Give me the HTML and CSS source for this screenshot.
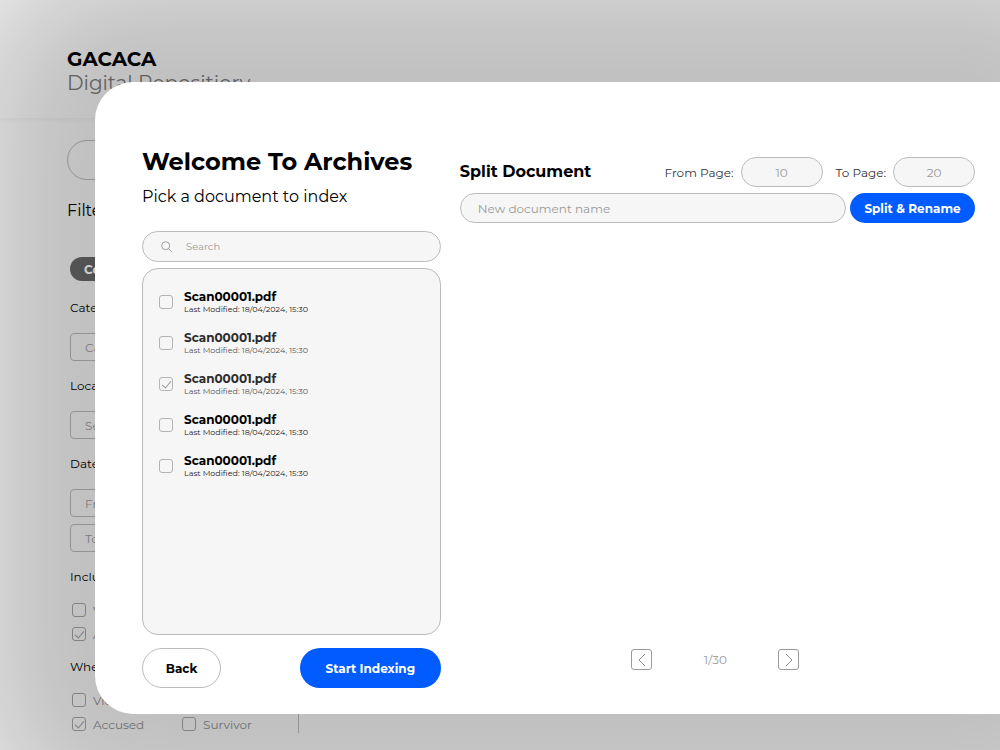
FILE: index.html
```html
<!DOCTYPE html>
<html lang="en">
    <head>
        <meta charset="utf-8">
        <title>GACACA Digital Repositiory</title>
        <link rel="stylesheet" href="styles.css">
    </head>
    <body>
        <div class="page">
            <div class="header">
                <h1>GACACA</h1>
                <p>Digital Repositiory</p>
            </div>

            <div class="filters">
                <input type="text" class="page-search" aria-label="Search the repository">
                <h2>Filters</h2>
                <div class="filter-list">
                    <button type="button" class="tag">Collections</button>

                    <label class="name" for="category">Category</label>
                    <input type="text" class="field" id="category" placeholder="Category">

                    <label class="name" for="location">Location</label>
                    <input type="text" class="field" id="location" placeholder="Select">

                    <label class="name" for="from">Date</label>
                    <input type="text" class="field" id="from" placeholder="From">
                    <input type="text" class="field" placeholder="To" aria-label="To">

                    <p class="name">Include</p>
                    <div class="options single">
                        <label><input type="checkbox">Victim</label>
                        <label><input type="checkbox" checked>Accused</label>
                    </div>

                    <p class="name">Where</p>
                    <div class="options">
                        <label><input type="checkbox">Victim</label>
                        <label><input type="checkbox">Witness</label>
                        <label><input type="checkbox" checked>Accused</label>
                        <label><input type="checkbox">Survivor</label>
                    </div>
                </div>
            </div>
        </div>

        <div class="modal">
            <div class="archive">
                <h2>Welcome To Archives</h2>
                <p class="sub">Pick a document to index</p>
                <div class="search">
                    <svg width="12" height="12" viewBox="0 0 12 12" fill="none" stroke="#8c8c8c" stroke-width="0.8">
                        <circle cx="4.7" cy="4.7" r="4"/>
                        <path d="M7.7 7.7L11.3 11.3"/>
                    </svg>
                    <input type="text" placeholder="Search" aria-label="Search">
                </div>
                <div class="documents">
                    <label class="document">
                        <input type="checkbox">
                        <span><b>Scan00001.pdf</b><small>Last Modified: 18/04/2024, 15:30</small></span>
                    </label>
                    <label class="document soft">
                        <input type="checkbox">
                        <span><b>Scan00001.pdf</b><small>Last Modified: 18/04/2024, 15:30</small></span>
                    </label>
                    <label class="document soft">
                        <input type="checkbox" checked>
                        <span><b>Scan00001.pdf</b><small>Last Modified: 18/04/2024, 15:30</small></span>
                    </label>
                    <label class="document">
                        <input type="checkbox">
                        <span><b>Scan00001.pdf</b><small>Last Modified: 18/04/2024, 15:30</small></span>
                    </label>
                    <label class="document">
                        <input type="checkbox">
                        <span><b>Scan00001.pdf</b><small>Last Modified: 18/04/2024, 15:30</small></span>
                    </label>
                </div>
                <div class="actions">
                    <button type="button" class="back">Back</button>
                    <button type="button" class="start">Start Indexing</button>
                </div>
            </div>

            <div class="split">
                <div class="split-row">
                    <h3>Split Document</h3>
                    <label for="frompage">From Page:</label>
                    <input type="text" class="number" id="frompage" placeholder="10">
                    <label for="topage" class="to">To Page:</label>
                    <input type="text" class="number" id="topage" placeholder="20">
                </div>
                <div class="rename-row">
                    <input type="text" placeholder="New document name" aria-label="New document name">
                    <button type="button">Split &amp; Rename</button>
                </div>
                <div class="pager">
                    <button type="button" aria-label="Previous page">
                        <svg width="10" height="14" viewBox="0 0 10 14" fill="none" stroke="#8c8c8c"><path d="M8 1L2 7L8 13"/></svg>
                    </button>
                    <span>1/30</span>
                    <button type="button" aria-label="Next page">
                        <svg width="10" height="14" viewBox="0 0 10 14" fill="none" stroke="#8c8c8c"><path d="M2 1L8 7L2 13"/></svg>
                    </button>
                </div>
            </div>
        </div>
    </body>
</html>
```
FILE: styles.css
```css
* {
    box-sizing: border-box;
}
body {
    margin: 0;
    height: 100vh;
    overflow: hidden;
    background: #eeeeee;
    color: #000000;
    font-family: Montserrat, Inter, sans-serif;
    font-size: 12px;
}
h1, h2, h3, p {
    margin: 0;
}
input, button {
    font-family: inherit;
    font-size: 12px;
    margin: 0;
}
button {
    cursor: pointer;
}
input::placeholder {
    color: #999999;
    opacity: 1;
}
input[type="checkbox"] {
    appearance: none;
    flex: none;
    display: flex;
    justify-content: center;
    width: 14px;
    height: 14px;
    border: 1px solid #b4b4b4;
    border-radius: 3px;
}
input[type="checkbox"]:checked::after {
    content: "";
    width: 4px;
    height: 8px;
    margin-top: 1px;
    border: solid #999999;
    border-width: 0 1px 1px 0;
    transform: rotate(40deg);
}

/* page behind the modal */
.header {
    height: 118px;
    padding: 47px 67px 0;
    box-shadow: 0 1px 6px rgba(0, 0, 0, 0.05);
}
.header h1 {
    font-size: 20px;
    line-height: 24px;
}
.header p {
    color: #777777;
    font-size: 20px;
    line-height: 24px;
}
.filters {
    width: 299px;
    padding: 22px 0 0 67px;
}
.page-search {
    display: block;
    width: 100%;
    height: 40px;
    background: transparent;
    border: 1px solid #b4b4b4;
    border-radius: 20px;
}
.filters h2 {
    margin-top: 21px;
    font-size: 16px;
    font-weight: 400;
    line-height: 20px;
}
.filter-list {
    margin-left: 3px;
    padding-top: 36px;
    border-right: 1px solid #b4b4b4;
}
.tag {
    display: block;
    height: 24px;
    margin-bottom: 2px;
    padding: 0 14px;
    background: #666666;
    color: #ffffff;
    border: 0;
    border-radius: 12px;
    font-weight: 700;
}
.name {
    display: block;
    padding: 16px 0 17px;
    line-height: 17px;
}
.field {
    display: block;
    width: 200px;
    height: 28px;
    margin-bottom: 7px;
    padding: 0 14px;
    background: transparent;
    border: 1px solid #b4b4b4;
    border-radius: 4px;
}
.field + .name {
    margin-top: -7px;
}
.options {
    display: grid;
    grid-template-columns: 110px 110px;
    row-gap: 6px;
    margin: -1px 0;
    padding-left: 2px;
    color: #8a8a8a;
}
.options.single {
    grid-template-columns: 110px;
}
.options label {
    display: flex;
    align-items: center;
    gap: 7px;
    height: 18px;
}
.options input[type="checkbox"] {
    border-color: #a0a0a0;
}

/* modal */
.modal {
    position: absolute;
    top: 82px;
    right: 0;
    bottom: 36px;
    left: 95px;
    display: flex;
    gap: 19px;
    padding: 64px 25px 26px 47px;
    background: #ffffff;
    border-radius: 38px 0 0 38px;
    box-shadow: 0 0 130px 110px rgba(0, 0, 0, 0.2);
}
.archive {
    flex: 58 1 0;
    display: flex;
    flex-direction: column;
}
.archive h2 {
    font-size: 24px;
    line-height: 32px;
    white-space: nowrap;
}
.sub {
    margin: 7px 0 22px;
    font-size: 16px;
    line-height: 24px;
}
.search {
    display: flex;
    align-items: center;
    gap: 13px;
    height: 31px;
    margin-bottom: 6px;
    padding: 0 18px;
    background: #f6f6f6;
    border: 1px solid #bbbbbb;
    border-radius: 16px;
}
.search svg {
    flex: none;
}
.search input {
    flex: 1;
    min-width: 0;
    padding: 0;
    background: transparent;
    border: 0;
    font-size: 10px;
}
.documents {
    flex: 1;
    padding: 19px 16px;
    background: #f6f6f6;
    border: 1px solid #bbbbbb;
    border-radius: 16px;
}
.document {
    display: flex;
    align-items: center;
    gap: 11px;
    height: 27px;
    margin-bottom: 14px;
}
.document b, .document small {
    display: block;
}
.document b {
    font-size: 12px;
    line-height: 15px;
}
.document small {
    color: #222222;
    font-size: 8px;
    line-height: 10px;
}
.soft b {
    color: #2c2c2c;
}
.soft small {
    color: #555555;
}
.actions {
    display: flex;
    justify-content: space-between;
    margin-top: 13px;
}
.actions button {
    height: 40px;
    border: 1px solid #bbbbbb;
    border-radius: 20px;
    background: #ffffff;
    color: #000000;
    font-weight: 700;
}
.back {
    width: 79px;
}
.actions .start {
    width: 141px;
    background: #005cff;
    border: 0;
    color: #ffffff;
}
.split {
    flex: 100 1 0;
    display: flex;
    flex-direction: column;
    padding: 11px 0 18px;
}
.split-row {
    display: flex;
    align-items: center;
    gap: 7px;
    margin-bottom: 6px;
}
.split-row h3 {
    margin-right: auto;
    font-size: 16px;
    line-height: 20px;
}
.split-row label {
    color: #333333;
}
.split-row .to {
    margin-left: 6px;
}
.split-row input, .rename-row input {
    height: 30px;
    background: #f6f6f6;
    border: 1px solid #bbbbbb;
    border-radius: 15px;
}
.split-row .number {
    width: 82px;
    text-align: center;
}
.rename-row {
    display: flex;
    gap: 4px;
}
.rename-row input {
    flex: 1;
    min-width: 0;
    padding: 0 17px;
}
.rename-row button {
    width: 125px;
    height: 30px;
    padding: 0;
    background: #005cff;
    border: 0;
    border-radius: 15px;
    color: #ffffff;
    font-weight: 700;
}
.pager {
    display: flex;
    justify-content: space-between;
    align-items: center;
    width: 172px;
    margin: auto auto 0;
    padding-right: 4px;
    color: #999999;
}
.pager button {
    display: flex;
    align-items: center;
    justify-content: center;
    width: 21px;
    height: 21px;
    padding: 0;
    background: transparent;
    border: 1px solid #999999;
    border-radius: 3px;
}
```
